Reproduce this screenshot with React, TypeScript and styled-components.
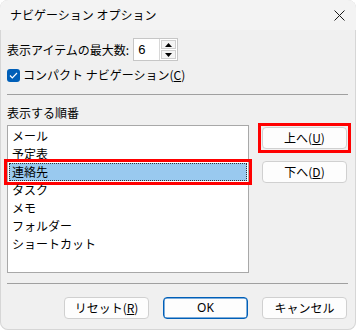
import React from "react";
import styled, { createGlobalStyle } from "styled-components";

const Global = createGlobalStyle`
  html, body { margin: 0; padding: 0; background: #ffffff; }
  body { font-family: "Noto Sans CJK JP", "Noto Sans", sans-serif; font-size: 12px; color: #000; }
  * { box-sizing: border-box; }
`;

const Window = styled.div`
  width: 356px;
  height: 330px;
  background: #f0f0f0;
  border-radius: 8px;
  overflow: hidden;
  display: flex;
  flex-direction: column;
  box-shadow: inset 0 0 0 1px #d6d6d6;
`;

const TitleBar = styled.div`
  height: 30px;
  flex: none;
  display: flex;
  align-items: center;
  justify-content: space-between;
  padding: 0 10px 0 10px;
  background: #f3f3f3;
  font-size: 12px;
  line-height: 16px;
`;

const CloseIcon = styled.svg`
  width: 11px;
  height: 11px;
  margin-right: 1px;
`;

const Body = styled.div`
  flex: 1;
  display: flex;
  flex-direction: column;
  padding: 8px 8px 0 7px;
`;

const Row = styled.div`
  display: flex;
  align-items: center;
  height: 23px;
`;

const Label = styled.span`
  line-height: 16px;
  white-space: nowrap;
`;

const Spin = styled.div`
  margin-left: 4px;
  display: flex;
  height: 23px;
  border: 1px solid #c6c6c6;
  background: #fff;
`;

const SpinInput = styled.div`
  width: 25px;
  padding-left: 4px;
  display: flex;
  align-items: center;
  font-family: "Liberation Sans", Arial, sans-serif;
  font-size: 13px;
`;

const SpinButtons = styled.div`
  width: 18px;
  display: flex;
  flex-direction: column;
  gap: 1px;
  background: #fff;
  border-left: 1px solid #d8d8d8;
  padding: 1px;
`;

const SpinBtn = styled.div`
  flex: 1;
  background: #f4f4f4;
  border: 1px solid #cfcfcf;
  display: flex;
  align-items: center;
  justify-content: center;
`;

const CheckRow = styled.div`
  display: flex;
  align-items: center;
  gap: 3px;
  margin-top: 7px;
  height: 14px;
`;

const CheckBox = styled.div`
  width: 13px;
  height: 13px;
  border-radius: 3px;
  background: #005fb8;
  display: flex;
  align-items: center;
  justify-content: center;
`;

const U = styled.span`
  text-decoration: underline;
  text-underline-offset: 1px;
`;

const Separator = styled.div<{ $top: number }>`
  height: 1px;
  background: #a0a0a0;
  margin-top: ${(p) => p.$top}px;
`;

const SectionLabel = styled.div`
  margin-top: 10px;
  line-height: 16px;
`;

const Main = styled.div`
  display: flex;
  align-items: flex-start;
  margin-top: 4px;
  gap: 13px;
`;

const ListBox = styled.div`
  width: 242px;
  height: 148px;
  background: #fff;
  border: 1px solid #a8a8a8;
  padding: 1px 1px 0 1px;
  display: flex;
  flex-direction: column;
`;

const Item = styled.div<{ $selected?: boolean }>`
  position: relative;
  height: 18px;
  line-height: 18px;
  padding-left: 3px;
  background: ${(p) => (p.$selected ? "#99c9ef" : "transparent")};
  outline: ${(p) => (p.$selected ? "1px dotted #333" : "none")};
  outline-offset: -1px;
  white-space: nowrap;
`;

const Mark = styled.div<{ $inset: string }>`
  position: absolute;
  inset: ${(p) => p.$inset};
  border: 3px solid #ff0000;
  pointer-events: none;
`;

const SideButtons = styled.div`
  display: flex;
  flex-direction: column;
  gap: 12px;
  padding-top: 2px;
`;

const Button = styled.div<{ $default?: boolean }>`
  position: relative;
  width: 85px;
  height: 22px;
  border-radius: 4px;
  background: #fdfdfd;
  border: 1px solid ${(p) => (p.$default ? "#005fb8" : "#d0d0d0")};
  box-shadow: ${(p) => (p.$default ? "inset 0 0 0 0.5px #005fb8" : "none")};
  display: flex;
  align-items: center;
  justify-content: center;
  line-height: 16px;
  white-space: nowrap;
`;

const Footer = styled.div`
  display: flex;
  justify-content: flex-end;
  gap: 14px;
  margin-top: 13px;
  padding-right: 1px;
`;

const OkText = styled.span`
  font-family: "Noto Sans", sans-serif;
  font-size: 12px;
`;

const items = ["メール", "予定表", "連絡先", "タスク", "メモ", "フォルダー", "ショートカット"];

export default function App() {
  return (
    <>
      <Global />
      <Window>
        <TitleBar>
          <Label>ナビゲーション オプション</Label>
          <CloseIcon viewBox="0 0 11 11">
            <path d="M0.5 0.5 L10.5 10.5 M10.5 0.5 L0.5 10.5" stroke="#1a1a1a" strokeWidth="1" fill="none" />
          </CloseIcon>
        </TitleBar>
        <Body>
          <Row>
            <Label>表示アイテムの最大数:</Label>
            <Spin>
              <SpinInput>6</SpinInput>
              <SpinButtons>
                <SpinBtn>
                  <svg width="7" height="4" viewBox="0 0 7 4">
                    <path d="M0 4 L3.5 0 L7 4 Z" fill="#000" />
                  </svg>
                </SpinBtn>
                <SpinBtn>
                  <svg width="7" height="4" viewBox="0 0 7 4">
                    <path d="M0 0 L3.5 4 L7 0 Z" fill="#000" />
                  </svg>
                </SpinBtn>
              </SpinButtons>
            </Spin>
          </Row>
          <CheckRow>
            <CheckBox>
              <svg width="9" height="7" viewBox="0 0 9 7">
                <path d="M1 3.5 L3.3 5.8 L8 1" stroke="#fff" strokeWidth="1.2" fill="none" />
              </svg>
            </CheckBox>
            <Label>
              コンパクト ナビゲーション(<U>C</U>)
            </Label>
          </CheckRow>
          <Separator $top={12} />
          <SectionLabel>表示する順番</SectionLabel>
          <Main>
            <ListBox>
              {items.map((it, i) => (
                <Item key={it} $selected={i === 2}>
                  {it}
                  {i === 2 && <Mark $inset="-4px -5px -4px -5px" />}
                </Item>
              ))}
            </ListBox>
            <SideButtons>
              <Button>
                上へ(<U>U</U>)
                <Mark $inset="-5px -5px -5px -5px" />
              </Button>
              <Button>
                下へ(<U>D</U>)
              </Button>
            </SideButtons>
          </Main>
          <Separator $top={10} />
          <Footer>
            <Button>
              リセット(<U>R</U>)
            </Button>
            <Button $default>
              <OkText>OK</OkText>
            </Button>
            <Button>キャンセル</Button>
          </Footer>
        </Body>
      </Window>
    </>
  );
}
